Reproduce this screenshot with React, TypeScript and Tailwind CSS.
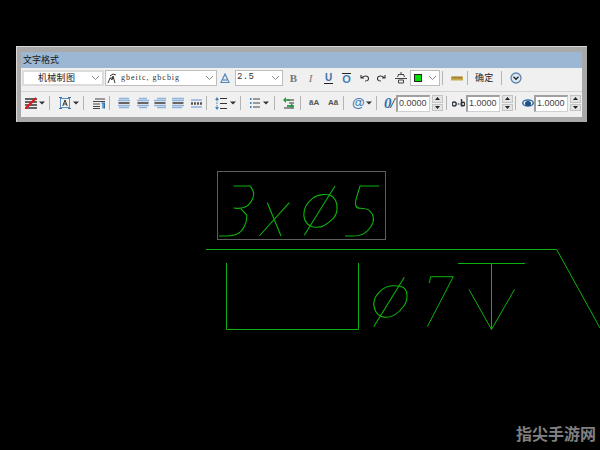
import React from "react";

const cjk = '"Noto Sans CJK SC", sans-serif';

function smooth(pts: number[][], closed = false) {
  const mid = (a: number[], b: number[]) => [(a[0] + b[0]) / 2, (a[1] + b[1]) / 2];
  if (closed) {
    const n = pts.length;
    const s = mid(pts[n - 1], pts[0]);
    let d = `M${s[0]} ${s[1]}`;
    for (let i = 0; i < n; i++) {
      const m = mid(pts[i], pts[(i + 1) % n]);
      d += `Q${pts[i][0]} ${pts[i][1]} ${m[0]} ${m[1]}`;
    }
    return d + "Z";
  }
  let d = `M${pts[0][0]} ${pts[0][1]}L${pts[1][0]} ${pts[1][1]}`;
  for (let i = 2; i < pts.length - 1; i++) {
    const m = mid(pts[i - 1], pts[i]);
    d += `L${m[0]} ${m[1]}Q${pts[i][0]} ${pts[i][1]} ${mid(pts[i], pts[i + 1])[0]} ${mid(pts[i], pts[i + 1])[1]}`;
  }
  const last = pts[pts.length - 1];
  return d + `L${last[0]} ${last[1]}`;
}

function Sep() {
  return <div className="w-px h-[14px] bg-[#b4b4b4] shrink-0" />;
}
function Arrow() {
  return (
    <svg width="6" height="4" viewBox="0 0 6 4" className="shrink-0 block">
      <path d="M0 0.5h6L3 3.5z" fill="#333" />
    </svg>
  );
}
function Chevron() {
  return (
    <svg width="9" height="6" viewBox="0 0 9 6" className="shrink-0 block">
      <path d="M1 1l3.500 3.500L8 1" fill="none" stroke="#8a8a8a" strokeWidth="1" />
    </svg>
  );
}
function Spin() {
  return (
    <div className="flex flex-col w-[11px] h-[16px] gap-px shrink-0">
      <div className="flex-1 bg-[#e4e4e4] border border-[#c4c4c4] flex items-center justify-center">
        <svg width="5" height="3" viewBox="0 0 5 3"><path d="M2.500 0L5 3H0z" fill="#222" /></svg>
      </div>
      <div className="flex-1 bg-[#e4e4e4] border border-[#c4c4c4] flex items-center justify-center">
        <svg width="5" height="3" viewBox="0 0 5 3"><path d="M0 0h5L2.500 3z" fill="#222" /></svg>
      </div>
    </div>
  );
}
function Num({ v }: { v: string }) {
  return (
    <div
      className="w-[34px] h-[17px] bg-white border-t-2 border-l-2 border-[#a0a0a0] border-r border-b border-r-[#d0d0d0] border-b-[#d0d0d0] flex items-center pl-px text-[9px] text-[#444] shrink-0 overflow-hidden"
      style={{ fontFamily: '"Liberation Sans", sans-serif' }}
    >
      {v}
    </div>
  );
}
function Align({ t, b, w = 12 }: { t: string; b: string; w?: number }) {
  return (
    <svg width={w} height="12" viewBox="0 0 12 12" className="shrink-0 block">
      <path d={t} stroke="#8fb4dc" strokeWidth="1.300" />
      <path d="M0.500 6h11" stroke="#444" strokeWidth="1.600" />
      <path d={b} stroke="#8fb4dc" strokeWidth="1.300" />
    </svg>
  );
}

export default function App() {
  return (
    <div className="relative w-[600px] h-[450px] bg-black overflow-hidden">
      <div className="pt-[46px] pl-[16px]">
        <div className="w-[571px] h-[76px] bg-[#a9a9a9] border-t border-l border-[#d8d8d8] pt-[5px] pl-[4px] pr-[5px] pb-[5px]">
          <div className="w-[561px] h-[65px] bg-[#f0f0f0] flex flex-col">
            <div
              className="h-[16px] bg-[#9bb7d4] flex items-center pl-[2px] text-[9px] text-[#1a1a1a] shrink-0"
              style={{ fontFamily: cjk }}
            >
              文字格式
            </div>

            {/* Row 1 */}
            <div className="h-[23px] flex items-center pl-px pb-[3px] shrink-0">
              <div
                className="w-[82px] h-[16px] bg-white border-2 border-[#dcdcdc] flex items-center text-[9px] text-[#222] shrink-0"
                style={{ fontFamily: cjk }}
              >
                <span className="ml-[14px] tracking-[0.3px]">机械制图</span>
                <span className="ml-auto mr-[2px]"><Chevron /></span>
              </div>
              <div className="ml-px w-[112px] h-[16px] bg-white border border-[#bdbdbd] flex items-center shrink-0">
                <svg width="11" height="11" viewBox="0 0 11 11" className="ml-px shrink-0">
                  <path d="M1 10l2-5 2 2 1-4 2 7M3 3l3-2 3 1M3 5h4" fill="none" stroke="#333" strokeWidth="1" />
                </svg>
                <span
                  className="ml-[3px] text-[8px] tracking-[0.98px] text-[#333] whitespace-nowrap"
                  style={{ fontFamily: '"Liberation Serif", serif' }}
                >
                  gbeitc, gbcbig
                </span>
                <span className="ml-auto mr-[2px]"><Chevron /></span>
              </div>
              <svg width="10" height="10" viewBox="0 0 10 10" className="ml-[3px] shrink-0">
                <path d="M1 9.500h8L5 1z" fill="none" stroke="#4f86c0" strokeWidth="1.200" />
                <path d="M3 7h4" stroke="#4f86c0" strokeWidth="1.200" />
              </svg>
              <div
                className="ml-[5px] w-[48px] h-[16px] bg-white border border-[#bdbdbd] flex items-center pl-px text-[9px] tracking-[0.3px] text-[#333] shrink-0"
                style={{ fontFamily: '"Liberation Mono", monospace' }}
              >
                2.5
                <span className="ml-auto mr-[2px]"><Chevron /></span>
              </div>
              <span className="ml-[6px] w-[9px] text-[11px] font-bold text-[#777] text-center shrink-0" style={{ fontFamily: '"Liberation Serif", serif' }}>B</span>
              <span className="ml-[8px] w-[9px] text-[11px] italic text-[#777] text-center shrink-0" style={{ fontFamily: '"Liberation Serif", serif' }}>I</span>
              <span className="ml-[9px] w-[9px] text-[10px] leading-[10px] font-bold text-[#3f6ea6] text-center border-b border-[#222] shrink-0" style={{ fontFamily: '"Liberation Sans", sans-serif' }}>U</span>
              <span className="ml-[9px] w-[9px] text-[11px] leading-[10px] font-bold text-[#3f7fb8] text-center border-t border-[#222] shrink-0" style={{ fontFamily: '"Liberation Sans", sans-serif' }}>O</span>
              <svg width="10" height="8" viewBox="0 0 10 8" className="ml-[9px] shrink-0">
                <path d="M1 1v3h3M1.500 4C3 1.500 8 1 8.500 4S6 7 5 7" fill="none" stroke="#333" strokeWidth="1.100" />
              </svg>
              <svg width="10" height="8" viewBox="0 0 10 8" className="ml-[6px] shrink-0">
                <path d="M9 1v3H6M8.500 4C7 1.500 2 1 1.500 4S4 7 5 7" fill="none" stroke="#333" strokeWidth="1.100" />
              </svg>
              <svg width="12" height="12" viewBox="0 0 12 12" className="ml-[9px] shrink-0">
                <path d="M0 6.500h12M6 0v2M3 2.500h6M3.500 2.500L2.500 5M8.500 2.500L9.500 5M3.500 8h5v3h-5z" fill="none" stroke="#444" strokeWidth="1" />
              </svg>
              <div className="ml-[3px] w-[30px] h-[16px] bg-white border border-[#bdbdbd] flex items-center shrink-0">
                <div className="ml-[3px] w-[8px] h-[8px] bg-[#00e000] border border-[#222] shrink-0" />
                <span className="ml-auto mr-[2px]"><Chevron /></span>
              </div>
              <span className="ml-[2px]"><Sep /></span>
              <svg width="12" height="5" viewBox="0 0 12 5" className="ml-[8px] shrink-0">
                <rect width="12" height="4" y="0.500" fill="#c9a94a" />
                <path d="M2 .500v2M4 .500v2M6 .500v2M8 .500v2M10 .500v2" stroke="#7a6520" strokeWidth="1" />
              </svg>
              <span className="ml-[4px]"><Sep /></span>
              <span className="ml-[7px] text-[9px] tracking-[0.2px] text-[#222] shrink-0" style={{ fontFamily: cjk }}>确定</span>
              <span className="ml-[8px]"><Sep /></span>
              <svg width="12" height="12" viewBox="0 0 12 12" className="ml-[8px] shrink-0">
                <circle cx="6" cy="6" r="5" fill="#dfe8f2" stroke="#5d86ad" strokeWidth="1.300" />
                <path d="M3.500 4.800L6 7.300l2.500-2.500" fill="none" stroke="#222" strokeWidth="1.300" />
              </svg>
            </div>

            <div className="h-px bg-[#d4d4d4] shrink-0" />

            {/* Row 2 */}
            <div className="h-[25px] flex items-center pl-[4px] pb-[3px] shrink-0">
              <svg width="12" height="12" viewBox="0 0 12 12" className="shrink-0">
                <path d="M0 2h12M0 5h12M0 8h12M0 11h12" stroke="#333" strokeWidth="1.600" />
                <path d="M0 12L11 1" stroke="#e01818" strokeWidth="2.200" />
              </svg>
              <span className="ml-[2px]"><Arrow /></span>
              <span className="ml-[4px]"><Sep /></span>
              <svg width="12" height="12" viewBox="0 0 12 12" className="ml-[9px] shrink-0">
                <rect x="1.500" y="1.500" width="9" height="9" fill="none" stroke="#5a8fc4" strokeWidth="1" />
                <path d="M0 0h3v1H0zM9 0h3v1H9zM0 11h3v1H0zM9 11h3v1H9z" fill="#3b6ea5" />
                <path d="M3.800 9L6 3l2.200 6M4.500 7h3" fill="none" stroke="#333" strokeWidth="1" />
              </svg>
              <span className="ml-[2px]"><Arrow /></span>
              <span className="ml-[4px]"><Sep /></span>
              <svg width="12" height="11" viewBox="0 0 12 11" className="ml-[9px] shrink-0">
                <path d="M2 1h10M0 3.500h12M0 6h7M0 8.500h7M0 10.500h7" stroke="#444" strokeWidth="1.200" />
                <path d="M8.500 5h3v5.500M10 5v5.500" stroke="#2f6fa8" strokeWidth="1.200" fill="none" />
              </svg>
              <span className="ml-[4px]"><Sep /></span>
              <span className="ml-[8px]"><Align t="M1 1.500h10M0 3.500h12" b="M0 8.500h12M1 10.500h10" /></span>
              <span className="ml-[7px]"><Align t="M2 1.500h8M0 3.500h12" b="M0 8.500h12M2 10.500h8" /></span>
              <span className="ml-[5px]"><Align t="M3 1.500h9M0 3.500h12" b="M0 8.500h12M3 10.500h9" /></span>
              <span className="ml-[6px]"><Align t="M0 1.500h12M0 3.500h12" b="M0 8.500h12M0 10.500h10" /></span>
              <svg width="11" height="9" viewBox="0 0 11 9" className="ml-[7px] shrink-0">
                <path d="M0 1h11M0 8h11" stroke="#8fb4dc" strokeWidth="1.500" />
                <path d="M0 4.500h11" stroke="#555" strokeWidth="2.500" strokeDasharray="2 1" />
              </svg>
              <span className="ml-[4px]"><Sep /></span>
              <svg width="12" height="13" viewBox="0 0 12 13" className="ml-[8px] shrink-0">
                <path d="M5 1.500h7M5 6.500h7M5 11.500h7" stroke="#333" strokeWidth="1.200" />
                <path d="M2 0L4 3H0zM2 13L4 10H0z" fill="#3f7fb8" />
                <path d="M2 3v7" stroke="#3f7fb8" strokeWidth="1" strokeDasharray="1.500 1" />
              </svg>
              <span className="ml-[3px]"><Arrow /></span>
              <span className="ml-[4px]"><Sep /></span>
              <svg width="10" height="12" viewBox="0 0 10 12" className="ml-[9px] shrink-0">
                <path d="M3 2h7M3 6h7M3 10h7" stroke="#444" strokeWidth="1.200" />
                <path d="M0 2h1.500M0 6h1.500M0 10h1.500" stroke="#3f7fb8" strokeWidth="2" />
              </svg>
              <span className="ml-[3px]"><Arrow /></span>
              <span className="ml-[5px]"><Sep /></span>
              <svg width="11" height="12" viewBox="0 0 11 12" className="ml-[8px] shrink-0">
                <path d="M4 3h7M6 6h5M4 9h7M1 11h10" stroke="#333" strokeWidth="1.200" />
                <path d="M0 3l3-3v6zM11 9L8 6v6z" fill="#1f9d3c" />
                <path d="M2 3h5M4 9h5" stroke="#1f9d3c" strokeWidth="1.500" />
              </svg>
              <span className="ml-[6px]"><Sep /></span>
              <span className="ml-[8px] text-[8px] font-bold text-[#555] w-[10px] shrink-0 whitespace-nowrap" style={{ fontFamily: '"Liberation Sans", sans-serif' }}>ãA</span>
              <span className="ml-[9px] text-[8px] font-bold text-[#555] w-[9px] shrink-0 whitespace-nowrap" style={{ fontFamily: '"Liberation Sans", sans-serif' }}>Aã</span>
              <span className="ml-[6px]"><Sep /></span>
              <span className="ml-[8px] w-[11px] text-[13px] leading-[14px] font-bold text-[#3f7fb8] shrink-0 whitespace-nowrap" style={{ fontFamily: '"Liberation Sans", sans-serif' }}>@</span>
              <span className="ml-[3px]"><Arrow /></span>
              <span className="ml-[4px]"><Sep /></span>
              <span className="ml-[7px] w-[12px] text-[15px] leading-[14px] font-bold italic text-[#2f6fb0] shrink-0 whitespace-nowrap tracking-[-1px]" style={{ fontFamily: '"Liberation Serif", serif' }}>0<span className="text-[#222] font-normal">/</span></span>
              <Num v="0.0000" />
              <span className="ml-[2px]"><Spin /></span>
              <span className="ml-[3px]"><Sep /></span>
              <svg width="13" height="8" viewBox="0 0 13 8" className="ml-[5px] shrink-0">
                <circle cx="2.200" cy="5" r="2" fill="none" stroke="#333" strokeWidth="1.400" />
                <circle cx="6.500" cy="5" r="1" fill="#3f7fb8" />
                <path d="M9.500 0v7.500" stroke="#333" strokeWidth="1.400" />
                <circle cx="11" cy="5" r="1.800" fill="none" stroke="#333" strokeWidth="1.400" />
              </svg>
              <span className="ml-px"><Num v="1.0000" /></span>
              <span className="ml-[2px]"><Spin /></span>
              <span className="ml-[2px]"><Sep /></span>
              <svg width="12" height="8" viewBox="0 0 12 8" className="ml-[6px] shrink-0">
                <ellipse cx="6" cy="4" rx="5.200" ry="3" fill="#fff" stroke="#2f6fa8" strokeWidth="1.600" />
                <ellipse cx="6" cy="4.500" rx="3" ry="2.500" fill="#1f4f7a" />
              </svg>
              <Num v="1.0000" />
              <span className="ml-[2px]"><Spin /></span>
            </div>
          </div>
        </div>
      </div>

      <svg width="600" height="328" viewBox="0 122 600 328" fill="none" className="block">
        <rect x="217.500" y="171.500" width="168" height="68" stroke="#5e5e5e" strokeWidth="1" />
        <g stroke="#0cb20c" strokeWidth="1">
          <path d="M206 249.500H556.700L600 328" />
          <path d="M226.500 263V329.500H358.500V263" />
          <path d="M458 263.500H525M491.500 263.500V329.500M469 289.500L491.500 329.500L514.500 289.500" />
          <path d="M429.300 283L430.700 276.700H453.300L427.300 326.700" />
        </g>
        <g stroke="#0cb20c" strokeWidth="1.100" strokeLinejoin="round">
          {/* 3 */}
          <path d={smooth([[233.5, 186], [250, 186], [254, 191.7], [253.3, 198.3], [248.3, 206], [240.7, 208.7], [233.5, 208]])} />
          <path d={smooth([[240.7, 208.7], [246.700, 215], [246.7, 221.7], [241.7, 231.7], [233.5, 236], [219, 236]])} />
          {/* x */}
          <path d="M267.300 202.700L281 236M289.300 202.700L259.300 236" />
          {/* phi */}
          <path d="M335 186L304.300 235.300" />
          <path d={smooth([[328.3, 194.3], [316.7, 195], [308.3, 201.7], [303.7, 210], [304, 220], [310, 226.7], [320, 227.7], [328.3, 223.3], [336.7, 215], [337.3, 203.3], [333.3, 196.7]], true)} />
          {/* 5 */}
          <path d={smooth([[379.3, 186], [360, 186], [353.3, 208.3], [366.7, 208.3], [372.7, 213.3], [374, 221.7], [368.3, 230.7], [360, 236], [345, 236]])} />
          {/* lower phi */}
          <path d="M373.700 326.700L404.300 277.300" />
          <path d={smooth([[400, 285.3], [385, 286.3], [375, 296.3], [373, 306.3], [378.3, 316.3], [390, 318], [400, 311.3], [407.3, 301.3], [406.7, 289.7]], true)} />
        </g>
      </svg>

      <div
        className="absolute left-[516px] top-[424px] text-[16px] leading-[18px] font-bold text-[#808080] whitespace-nowrap"
        style={{ fontFamily: cjk }}
      >
        指尖手游网
      </div>
    </div>
  );
}
